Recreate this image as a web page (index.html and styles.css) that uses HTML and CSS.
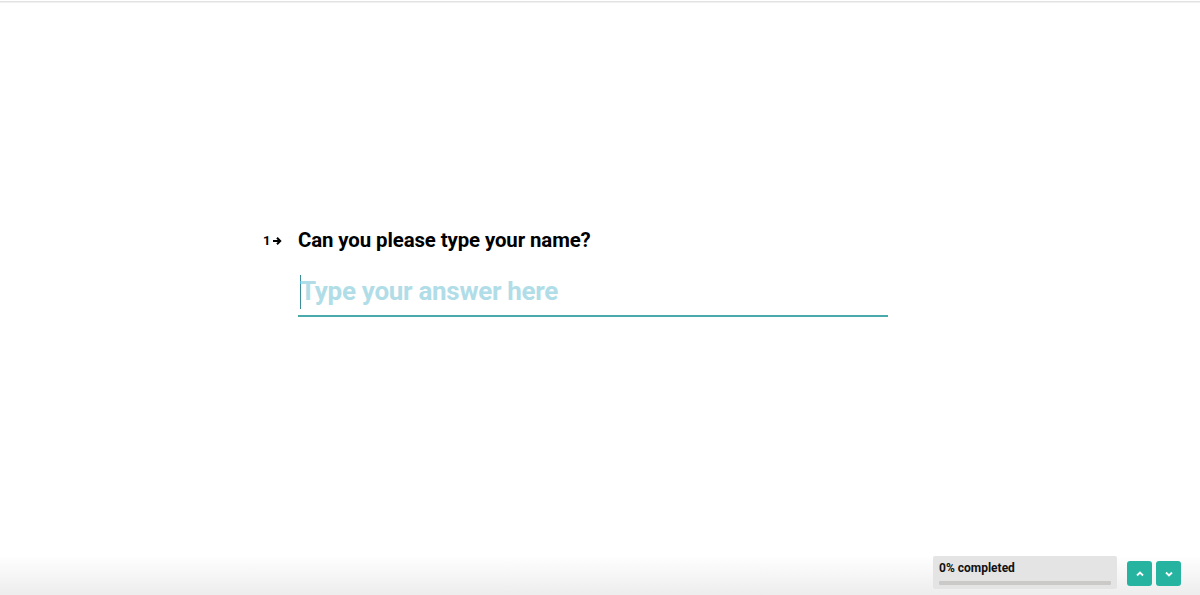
FILE: index.html
```html
<!DOCTYPE html>
<html>
<head>
<meta charset="utf-8">
<link rel="stylesheet" href="styles.css">
</head>
<body>
<div class="page">
  <div class="topline"></div>
  <main class="stage">
    <div class="question">
      <div class="num">1<svg class="arrow" width="11" height="10" viewBox="0 0 11 10"><path d="M1 5h7.5M5 1.8L8.2 5 5 8.2" fill="none" stroke="#000" stroke-width="2"/></svg></div>
      <div class="body">
        <h1 class="title">Can you please type your name?</h1>
        <div class="field"><span class="caret"></span><span class="placeholder">Type your answer here</span></div>
      </div>
    </div>
  </main>
  <footer class="footer">
    <div class="progress">
      <div class="ptext">0% completed</div>
      <div class="pbar"></div>
    </div>
    <div class="navs">
      <button class="nav"><svg width="12" height="12" viewBox="0 0 12 12"><path d="M3 7.5L6 4.5l3 3" fill="none" stroke="#fff" stroke-width="1.8"/></svg></button>
      <button class="nav"><svg width="12" height="12" viewBox="0 0 12 12"><path d="M3 4.5L6 7.5l3-3" fill="none" stroke="#fff" stroke-width="1.8"/></svg></button>
    </div>
  </footer>
</div>
</body>
</html>
```
FILE: styles.css
```css
html, body { margin: 0; padding: 0; background: #fff; }
body { font-family: Roboto, "Liberation Sans", sans-serif; }
.page { width: 1200px; height: 595px; position: relative; overflow: hidden; display: flex; flex-direction: column; }
.topline { height: 1px; margin-top: 1px; background: #e2e2e2; box-shadow: 0 1px 1px #eee; }
.stage { flex: 1; display: flex; align-items: flex-start; padding-top: 224px; }
.question { display: grid; grid-template-columns: 35px 590px; align-items: start; margin-left: 263px; }
.num { font-size: 13px; font-weight: 700; height: 28px; display: flex; align-items: center; gap: 2px; color: #000; }
.arrow { margin-top: 1px; }
.title { margin: 0; font-size: 20.4px; font-weight: 700; line-height: 28px; color: #000; letter-spacing: -0.1px; }
.field { margin-top: 19px; height: 42px; border-bottom: 2px solid #4aa9aa; display: flex; align-items: center; position: relative; }
.caret { width: 1px; height: 34px; background: #3a8d96; margin-left: 2px; margin-top: -4px; }
.placeholder { font-size: 26px; font-weight: 700; color: #b0dde7; letter-spacing: -0.3px; margin-left: -1px; margin-top: -6px; }
.footer { position: absolute; left: 0; right: 0; bottom: 0; height: 40px; display: flex; justify-content: flex-end; align-items: flex-start; padding-right: 19px; gap: 10px; background: linear-gradient(to bottom, rgba(255,255,255,0), rgba(225,225,225,0.6)); }
.progress { margin-top: 1px; width: 184px; height: 33px; background: #e4e4e4; border-radius: 2px; box-sizing: border-box; padding: 5px 6px 0; }
.ptext { font-size: 12px; font-weight: 700; color: #111; line-height: 14px; }
.pbar { margin-top: 6px; height: 4px; background: #cbc8c8; border-radius: 1px; }
.navs { display: flex; gap: 4px; margin-top: 6px; }
.nav { width: 25px; height: 25px; border: 0; border-radius: 3px; background: #26b4a0; padding: 0; display: flex; align-items: center; justify-content: center; }
```
